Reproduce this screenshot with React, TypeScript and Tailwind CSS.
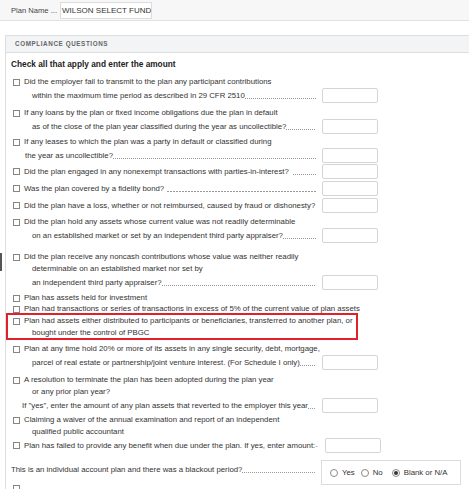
import React from 'react';

const Box = () => (
  <span className="ml-[2px] mr-[4px] h-[7px] w-[7px] shrink-0 border border-[#858585] bg-white" />
);

const Amount = () => (
  <span className="ml-[6px] block h-[15px] w-[56px] shrink-0 rounded-[2px] border border-[#d5d5d5] bg-white" />
);

// dotted / dashed leader running up to the amount box
const Leader = ({ kind }: { kind: 'dots' | 'dash' | 'none' }) => {
  if (kind === 'none') return <span className="flex-1" />;
  if (kind === 'dash')
    return (
      <span className="mt-[5px] h-[1px] min-w-0 flex-1 bg-[linear-gradient(to_right,#9a9a9a_66%,transparent_66%)] bg-[length:3px_1px] bg-repeat-x" />
    );
  return (
    <span className="mt-[5px] h-[1px] min-w-0 flex-1 bg-[linear-gradient(to_right,#999_50%,transparent_50%)] bg-[length:2px_1px] bg-repeat-x" />
  );
};

// first line of a question, with the checkbox
const First = ({ children }: { children?: React.ReactNode }) => (
  <div className="flex h-[12px] items-center whitespace-nowrap">
    <Box />
    <span>{children}</span>
  </div>
);

const Plain = ({ children, pad = 'pl-[21px]' }: { children: React.ReactNode; pad?: string }) => (
  <div className={`flex h-[12px] items-center whitespace-nowrap ${pad}`}>{children}</div>
);

// a line that ends in an amount box
const WithAmount = ({
  children,
  pad = 'pl-[21px]',
  leader = 'dots',
}: {
  children: React.ReactNode;
  pad?: string;
  leader?: 'dots' | 'dash' | 'none';
}) => (
  <div className={`flex h-[15px] w-[367px] items-center whitespace-nowrap ${pad}`}>
    <span className="shrink-0">{children}</span>
    <Leader kind={leader} />
    <Amount />
  </div>
);

const Radio = ({ on, label }: { on?: boolean; label: string }) => (
  <span className="flex items-center">
    <span className="mr-[4px] flex h-[8px] w-[8px] items-center justify-center rounded-full border border-[#8a8a8a] bg-white">
      {on && <span className="h-[4px] w-[4px] rounded-full bg-[#333]" />}
    </span>
    {label}
  </span>
);

export default function App() {
  return (
    <div
      className="relative h-[489px] w-[469px] overflow-hidden bg-white text-[7.8px] text-[#333]"
      style={{ fontFamily: '"Liberation Sans", Arial, sans-serif' }}
    >
      <span className="absolute left-0 top-[253px] h-[18px] w-[2px] bg-[#555]" />

      {/* top bar */}
      <div className="flex h-[21px] items-start border-b border-[#e2e2e2] bg-[#f7f7f7] pl-[11px]">
        <span className="mt-[5px] text-[7.6px] text-[#444]">Plan Name ...</span>
        <div className="ml-[3px] mt-[2px] flex h-[17px] w-[92px] items-center overflow-hidden whitespace-nowrap border border-[#dcdcdc] bg-white pl-[1px] text-[8px] uppercase text-[#333]">
          WILSON SELECT FUND
        </div>
      </div>

      {/* compliance panel */}
      <div className="ml-[5px] mt-[14px] w-[480px] border-l border-t border-[#dedede]">
        <div className="flex h-[17px] items-center border-b border-[#dedede] bg-[#f3f4f6] pl-[9px] text-[6.3px] font-bold tracking-[0.6px] text-[#666]">
          COMPLIANCE QUESTIONS
        </div>

        <div className="flex flex-col pl-[5px]">
          <div className="mt-[5px] h-[13px] text-[8.3px] font-bold leading-[13px] text-[#222]">
            Check all that apply and enter the amount
          </div>

          <div className="mt-[5px]">
            <First>Did the employer fail to transmit to the plan any participant contributions</First>
            <WithAmount>within the maximum time period as described in 29 CFR 2510</WithAmount>
          </div>

          <div className="mt-[4px]">
            <First>If any loans by the plan or fixed income obligations due the plan in default</First>
            <WithAmount>as of the close of the plan year classified during the year as uncollectible?</WithAmount>
          </div>

          <div className="mt-[2px]">
            <First>If any leases to which the plan was a party in default or classified during</First>
            <WithAmount pad="pl-[14px]">the year as uncollectible?</WithAmount>
          </div>

          <div className="mt-[1px] flex h-[15px] w-[367px] items-center whitespace-nowrap">
            <Box />
            <span>Did the plan engaged in any nonexempt transactions with parties-in-interest?</span>
            <span className="flex-1" />
            <span className="mt-[5px] h-[1px] w-[23px] bg-[linear-gradient(to_right,#999_50%,transparent_50%)] bg-[length:2px_1px] bg-repeat-x" />
            <Amount />
          </div>

          <div className="mt-[2px] flex h-[15px] w-[367px] items-center whitespace-nowrap">
            <Box />
            <span className="mr-[3px]">Was the plan covered by a fidelity bond?</span>
            <Leader kind="dash" />
            <Amount />
          </div>

          <div className="mt-[2px] flex h-[15px] w-[367px] items-center whitespace-nowrap">
            <Box />
            <span>Did the plan have a loss, whether or not reimbursed, caused by fraud or dishonesty?</span>
            <span className="flex-1" />
            <Amount />
          </div>

          <div className="mt-[3px]">
            <First>Did the plan hold any assets whose current value was not readily determinable</First>
            <WithAmount>on an established market or set by an independent third party appraiser?</WithAmount>
          </div>

          <div className="mt-[8px]">
            <First>Did the plan receive any noncash contributions whose value was neither readily</First>
            <Plain>determinable on an established market nor set by</Plain>
            <WithAmount>an independent third party appraiser?</WithAmount>
          </div>

          <div className="mt-[2px]">
            <First>Plan has assets held for investment</First>
          </div>
          <div className="mt-[-1px]">
            <First>Plan had transactions or series of transactions in excess of 5% of the current value of plan assets</First>
          </div>

          <div className="relative">
            <span className="absolute left-[-5px] top-[-2px] h-[27px] w-[352px] border-2 border-[#e0202a]" />
            <First>Plan had assets either distributed to participants or beneficiaries, transferred to another plan, or</First>
            <Plain>bought under the control of PBGC</Plain>
          </div>

          <div className="mt-[4px]">
            <First>Plan at any time hold 20% or more of its assets in any single security, debt, mortgage,</First>
            <WithAmount>parcel of real estate or partnership/joint venture interest. (For Schedule I only)</WithAmount>
          </div>

          <div className="mt-[4px]">
            <First>A resolution to terminate the plan has been adopted during the plan year</First>
            <Plain>or any prior plan year?</Plain>
            <WithAmount pad="pl-[11px]">If "yes", enter the amount of any plan assets that reverted to the employer this year</WithAmount>
          </div>

          <div className="mt-[1px]">
            <First>Claiming a waiver of the annual examination and report of an independent</First>
            <Plain>qualified public accountant</Plain>
          </div>

          <div className="flex h-[15px] w-[367px] items-center whitespace-nowrap">
            <Box />
            <span>Plan has failed to provide any benefit when due under the plan. If yes, enter amount:</span>
            <span className="flex-1" />
            <span className="mr-[1px] text-[#8a8a8a]">-</span>
            <Amount />
          </div>

          <div className="mt-[7px] flex h-[25px] w-[450px] items-center whitespace-nowrap">
            <span className="mb-[6px] shrink-0">This is an individual account plan and there was a blackout period?</span>
            <span className="mb-[1px] h-[1px] min-w-0 flex-1 bg-[linear-gradient(to_right,#999_50%,transparent_50%)] bg-[length:2px_1px] bg-repeat-x" />
            <div className="ml-[5px] flex h-[25px] w-[140px] shrink-0 items-center gap-[6px] border border-[#dcdcdc] pl-[8px]">
              <Radio label="Yes" />
              <Radio label="No" />
              <span className="ml-[3px]">
                <Radio on label="Blank or N/A" />
              </span>
            </div>
          </div>

          <div className="mt-[-3px]">
            <First />
          </div>
        </div>
      </div>
    </div>
  );
}
